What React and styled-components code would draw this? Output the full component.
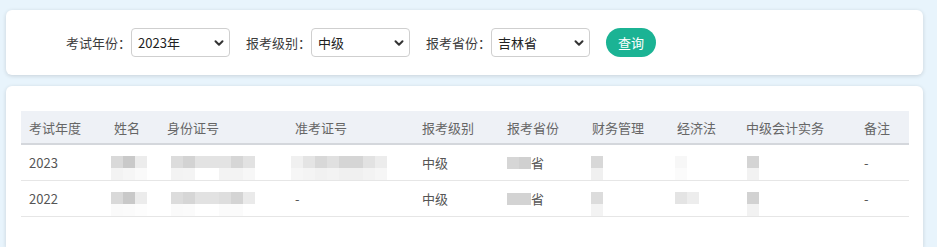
import React from "react";
import styled, { createGlobalStyle } from "styled-components";

const Global = createGlobalStyle`
  html, body { margin: 0; padding: 0; background: #e8f4fc; }
  body { font-family: "Microsoft YaHei", "Noto Sans CJK SC", "Noto Sans", sans-serif; font-size: 13px; }
`;

const Page = styled.div`
  display: flex;
  flex-direction: column;
  gap: 11px;
  padding: 10px 14px 0 6px;
  height: 247px;
  box-sizing: border-box;
  overflow: hidden;
`;

const Card = styled.div`
  background: #fff;
  border-radius: 6px;
  box-shadow: 0 1px 4px rgba(0, 0, 0, 0.14);
`;

const FilterCard = styled(Card)`
  display: flex;
  align-items: center;
  padding: 18px 0 18px 60px;
`;

const Field = styled.div`
  display: flex;
  align-items: center;
  margin-right: 16px;
`;

const Label = styled.span`
  color: #3c3c3c;
  font-size: 13px;
  line-height: 29px;
`;

const SelectBox = styled.div`
  display: flex;
  align-items: center;
  justify-content: space-between;
  box-sizing: border-box;
  width: 99px;
  height: 29px;
  padding: 0 4px 0 6px;
  border: 1px solid #cfcfcf;
  border-radius: 4px;
  background: #fff;
  color: #222;
  font-size: 13px;
`;

const Button = styled.button`
  width: 50px;
  height: 29px;
  border: none;
  border-radius: 15px;
  background: #1bb394;
  color: #fff;
  font-family: inherit;
  font-size: 13px;
  padding: 0;
`;

const TableCard = styled(Card)`
  flex: 1;
  padding: 25px 14px 0 15px;
  border-radius: 6px 6px 0 0;
`;

const Table = styled.table`
  width: 888px;
  border-collapse: collapse;
  table-layout: fixed;
`;

const Th = styled.th`
  height: 32px;
  padding: 0 0 0 8px;
  text-align: left;
  font-weight: normal;
  color: #666;
  background: #eef1f6;
  border-bottom: 2px solid #d4d7dc;
  font-size: 13px;
`;

const Td = styled.td`
  height: 34px;
  padding: 0 0 0 8px;
  color: #555;
  border-bottom: 1px solid #e6e6e6;
  font-size: 13px;
  vertical-align: middle;
`;

const CellLine = styled.div`
  display: flex;
  align-items: center;
  margin-left: ${(p) => p.$shift || 0}px;
`;

const Mosaic = styled.div`
  display: grid;
  grid-template-columns: repeat(${(p) => p.$cols}, 12px);
  grid-auto-rows: 12px;
  margin-top: ${(p) => p.$top || 0}px;
`;

const Tile = styled.div`
  background: ${(p) => p.$c};
`;

const Chevron = () => (
  <svg width="12" height="12" viewBox="0 0 12 12">
    <path d="M2.5 4.2 L6 7.7 L9.5 4.2" fill="none" stroke="#333" strokeWidth="2" strokeLinecap="round" strokeLinejoin="round" />
  </svg>
);

const Blur = ({ top, bottom, shift, top0 = 11 }) => (
  <CellLine $shift={shift}>
    <Mosaic $cols={top.length} $top={top0}>
      {top.map((c, i) => (
        <Tile key={"t" + i} $c={c} />
      ))}
      {bottom.map((c, i) => (
        <Tile key={"b" + i} $c={c} />
      ))}
    </Mosaic>
  </CellLine>
);

const Province = ({ blocks }) => (
  <CellLine>
    <Mosaic $cols={blocks.length} $top={0}>
      {blocks.map((c, i) => (
        <Tile key={i} $c={c} />
      ))}
    </Mosaic>
    <span>省</span>
  </CellLine>
);

const cols = [85, 53, 128, 127, 85, 85, 85, 69, 118, 53];
const heads = ["考试年度", "姓名", "身份证号", "准考证号", "报考级别", "报考省份", "财务管理", "经济法", "中级会计实务", "备注"];

const nameTop = ["#d9d9d9", "#c9c9c9", "#ececec"];
const nameBot = ["#f3f3f3", "#f6f6f6", "#fafafa"];
const idTop = ["#dcdcdc", "#d3d3d3", "#e3e3e3", "#e3e3e3", "#e3e3e3", "#d6d6d6", "#e2e2e2"];
const idBot = ["#f3f3f3", "#f4f4f4", "#ffffff", "#ffffff", "#f3f3f3", "#f3f3f3", "#f7f7f7"];
const idBot2 = ["#fafafa", "#fbfbfb", "#ffffff", "#ffffff", "#fbfbfb", "#fbfbfb", "#ffffff"];
const tkTop = ["#f0f0f0", "#e4e4e4", "#d8d8d8", "#e0e0e0", "#d5d5d5", "#d5d5d5", "#e2e2e2", "#ececec"];
const tkBot = ["#f6f6f6", "#f4f4f4", "#f1f1f1", "#f3f3f3", "#f0f0f0", "#f0f0f0", "#f3f3f3", "#f6f6f6"];

const rows = [
  {
    year: "2023",
    name: <Blur shift={-3} top={nameTop} bottom={nameBot} />,
    id: <Blur shift={4} top={idTop} bottom={idBot} />,
    ticket: <Blur shift={-4} top={tkTop} bottom={tkBot} />,
    level: "中级",
    prov: <Province blocks={["#d6d6d6", "#d0d0d0"]} />,
    fin: <Blur shift={-1} top={["#d8d8d8"]} bottom={["#f0f0f0"]} />,
    law: <Blur shift={-2} top={["#f7f7f7"]} bottom={["#fbfbfb"]} />,
    acc: <Blur shift={1} top={["#d4d4d4"]} bottom={["#f2f2f2"]} />,
    note: "-",
  },
  {
    year: "2022",
    name: <Blur shift={-3} top={nameTop} bottom={["#fafafa", "#fbfbfb", "#fdfdfd"]} />,
    id: <Blur shift={4} top={["#dcdcdc", "#d6d6d6", "#e2e2e2", "#e2e2e2", "#dedede", "#d4d4d4", "#eaeaea"]} bottom={idBot2} />,
    ticket: "-",
    level: "中级",
    prov: <Province blocks={["#d3d3d3", "#d3d3d3"]} />,
    fin: <Blur shift={-1} top={["#dcdcdc"]} bottom={["#f3f3f3"]} />,
    law: <Blur shift={-2} top={["#e4e4e4", "#ededed"]} bottom={["#ffffff", "#ffffff"]} />,
    acc: <Blur shift={1} top={["#d2d2d2"]} bottom={["#f2f2f2"]} />,
    note: "-",
  },
];

const Select = ({ value }) => (
  <SelectBox>
    <span>{value}</span>
    <Chevron />
  </SelectBox>
);

export default function App() {
  return (
    <>
      <Global />
      <Page>
        <FilterCard>
          <Field>
            <Label>考试年份：</Label>
            <Select value="2023年" />
          </Field>
          <Field>
            <Label>报考级别：</Label>
            <Select value="中级" />
          </Field>
          <Field>
            <Label>报考省份：</Label>
            <Select value="吉林省" />
          </Field>
          <Button>查询</Button>
        </FilterCard>
        <TableCard>
          <Table>
            <colgroup>
              {cols.map((w, i) => (
                <col key={i} style={{ width: w }} />
              ))}
            </colgroup>
            <thead>
              <tr>
                {heads.map((h) => (
                  <Th key={h}>{h}</Th>
                ))}
              </tr>
            </thead>
            <tbody>
              {rows.map((r) => (
                <tr key={r.year}>
                  <Td>{r.year}</Td>
                  <Td>{r.name}</Td>
                  <Td>{r.id}</Td>
                  <Td>{r.ticket}</Td>
                  <Td>{r.level}</Td>
                  <Td>{r.prov}</Td>
                  <Td>{r.fin}</Td>
                  <Td>{r.law}</Td>
                  <Td>{r.acc}</Td>
                  <Td>{r.note}</Td>
                </tr>
              ))}
            </tbody>
          </Table>
        </TableCard>
      </Page>
    </>
  );
}
